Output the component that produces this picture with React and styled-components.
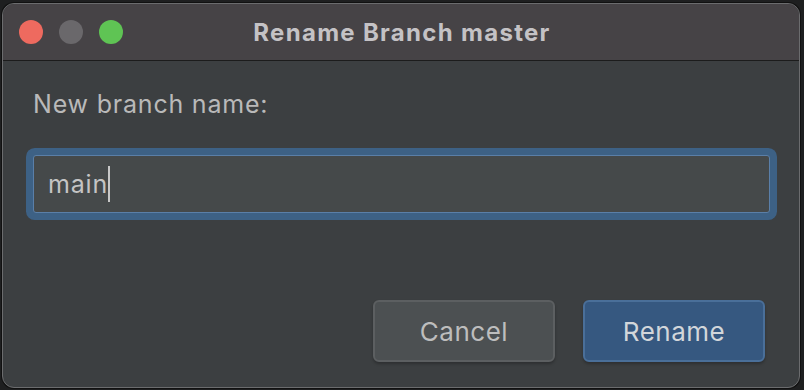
import React from "react";
import styled, { createGlobalStyle } from "styled-components";

const GlobalStyles = createGlobalStyle`
  html, body {
    margin: 0;
    padding: 0;
    background: #1e1f20;
  }
  body {
    font-family: Inter, "Liberation Sans", Arial, sans-serif;
    width: 804px;
    height: 390px;
    overflow: hidden;
  }
`;

const App = () => {
  return <Screen>
    <GlobalStyles />
    <Window>
      <TitleBar>
        <Lights>
          <Light color="#ee6a5f" />
          <Light color="#6a686b" />
          <Light color="#5fc454" />
        </Lights>
        <Title>Rename Branch master</Title>
      </TitleBar>

      <Body>
        <Label>New branch name:</Label>
        <Field>
          <Value>main</Value>
          <Caret />
        </Field>

        <Buttons>
          <Button>Cancel</Button>
          <Button primary>Rename</Button>
        </Buttons>
      </Body>
    </Window>
  </Screen>
};

// Styled Components
const Screen = styled.div` // desktop behind the dialog
  width: 804px;
  height: 390px;
  padding: 3px 4px 2px 2px;
  box-sizing: border-box;
  display: flex;
`;

const Window = styled.div`
  flex: 1;
  display: flex;
  flex-direction: column;
  border-radius: 12px;
  overflow: hidden;
  border: 1px solid #6b6c6e;
  box-shadow: 0 0 0 1px #111;
  background: #3c3f41;
`;

const TitleBar = styled.div`
  position: relative;
  height: 56px;
  flex: none;
  display: flex;
  align-items: center;
  justify-content: center;
  background: #464346;
  border-bottom: 1px solid #1c1c1c;
`;

const Lights = styled.div` // traffic lights overlay the title bar
  position: absolute;
  left: 16px;
  top: 16px;
  display: flex;
  gap: 16px;
`;

const Light = styled.span`
  width: 24px;
  height: 24px;
  border-radius: 50%;
  background: ${p => p.color};
`;

const Title = styled.div`
  color: #c4c2c5;
  font-size: 24px;
  font-weight: bold;
  letter-spacing: 1.3px;
  padding-left: 2px;
`;

const Body = styled.div`
  flex: 1;
  display: flex;
  flex-direction: column;
  padding: 30px 22px 25px 23px;
`;

const Label = styled.div`
  color: #b9b9b9;
  font-size: 25px;
  letter-spacing: 0.8px;
  line-height: 26px;
  padding-left: 7px;
`;

const Field = styled.div`
  margin: 38px 7px 0 7px;
  height: 56px;
  display: flex;
  align-items: center;
  padding-left: 14px;
  background: #45494a;
  border: 1px solid #5a7fa8;
  border-radius: 3px;
  box-shadow: 0 0 0 7px #3d6185;
`;

const Value = styled.span`
  color: #c4c4c4;
  font-size: 25px;
  letter-spacing: 0.8px;
`;

const Caret = styled.span`
  width: 2px;
  height: 36px;
  background: #c8c8c8;
`;

const Buttons = styled.div`
  margin-top: auto;
  display: flex;
  justify-content: flex-end;
  gap: 28px;
  padding-right: 12px;
`;

const Button = styled.button`
  width: 182px;
  height: 62px;
  box-sizing: border-box;
  border-radius: 6px;
  font-family: Inter, "Liberation Sans", Arial, sans-serif;
  font-size: 26px;
  letter-spacing: 0.5px;
  color: ${p => p.primary ? "#d2d6da" : "#bdbdbd"};
  background: ${p => p.primary ? "#365880" : "#4c5052"};
  border: 2px solid ${p => p.primary ? "#4a6f99" : "#5c5f61"};
  box-shadow: 0 2px 3px rgba(0, 0, 0, 0.25);
`;

export default App;
